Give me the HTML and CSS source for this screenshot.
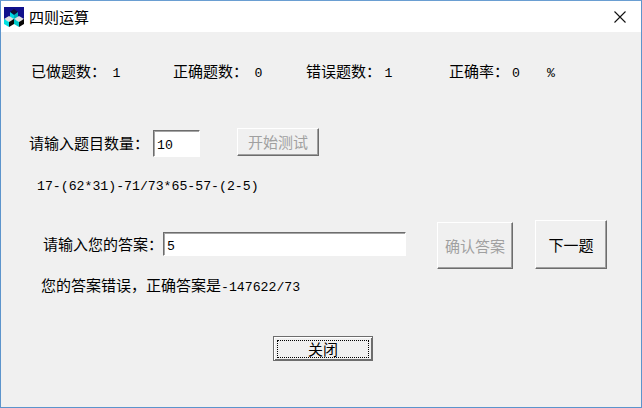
FILE: index.html
```html
<!DOCTYPE html>
<html lang="zh-CN">
<head>
  <title>四则运算</title>
  <link rel="stylesheet" href="styles.css">
</head>
<body>
  <div class="window">
    <div class="titlebar">
      <svg class="app-icon" width="20" height="20" viewBox="0 0 20 20">
        <rect x="0" y="0" width="20" height="13" fill="#10108c"/>
        <path d="M6 5 L10 2 L14 5 L10 8 Z" fill="#101030"/>
        <path d="M6 5 L10 8 V14 L6 11 Z" fill="#00d8e0"/>
        <path d="M14 5 L10 8 V14 L14 11 Z" fill="#00b0b8"/>
        <path d="M0 12 L5 9 L10 12 L5 15 Z" fill="#e0e0e0"/>
        <path d="M0 12 L5 15 V20 L0 17 Z" fill="#00e0e0"/>
        <path d="M10 12 L5 15 V20 L10 17 Z" fill="#080808"/>
        <path d="M10 12 L15 9 L20 12 L15 15 Z" fill="#e0e0e0"/>
        <path d="M10 12 L15 15 V20 L10 17 Z" fill="#00c8c8"/>
        <path d="M20 12 L15 15 V20 L20 17 Z" fill="#080808"/>
      </svg>
      <span class="title">四则运算</span>
      <svg class="close-x" width="12" height="12" viewBox="0 0 12 12">
        <path d="M0.500 0.500 L11.500 11.500 M11.500 0.500 L0.500 11.500" stroke="#111" stroke-width="1.100" fill="none"/>
      </svg>
    </div>

    <div class="client">
      <div class="stats">
        <div class="stat stat-done">已做题数： <span class="mono shift">1</span></div>
        <div class="stat stat-right">正确题数： <span class="mono shift">0</span></div>
        <div class="stat stat-wrong">错误题数： <span class="mono">1</span></div>
        <div class="stat">正确率：<span class="mono shift">0</span><span class="mono percent">%</span></div>
      </div>

      <div class="count-row">
        <label class="count-label">请输入题目数量：</label>
        <div class="field count-field"><span class="mono">10</span></div>
        <button class="btn btn-off start-btn">开始测试</button>
      </div>

      <div class="expr mono">17-(62*31)-71/73*65-57-(2-5)</div>

      <div class="answer-row">
        <label class="answer-label">请输入您的答案：</label>
        <div class="field answer-field"><span class="mono">5</span></div>
        <button class="btn btn-off confirm-btn">确认答案</button>
        <button class="btn next-btn">下一题</button>
      </div>

      <div class="message">您的答案错误，正确答案是<span class="mono">-147622/73</span></div>

      <div class="close-row">
        <button class="btn close-btn"><span class="focus">关闭</span></button>
      </div>
    </div>
  </div>
</body>
</html>
```

FILE: styles.css
```css
html, body {
  margin: 0;
  height: 100%;
  overflow: hidden;
}

body {
  font-family: "Noto Sans CJK SC", sans-serif;
  font-size: 15px;
  color: #000;
}

.window {
  box-sizing: border-box;
  height: 408px;
  display: flex;
  flex-direction: column;
  border: 1px solid #5c94cc;
  border-top-color: #6a9ed2;
  background: #f0f0f0;
}

.titlebar {
  height: 31px;
  flex-shrink: 0;
  display: flex;
  align-items: center;
  padding: 0 15px 0 3px;
  background: #fff;
}

.app-icon {
  margin-right: 5px;
}

.title {
  flex: 1;
  font-size: 15px;
  line-height: 20px;
}

.client {
  flex: 1;
}

.mono {
  font-family: "Liberation Mono", monospace;
  font-size: 13.2px;
}

.shift {
  margin-left: 3px;
}

.stats {
  display: flex;
  padding: 29px 0 0 30px;
  line-height: 20px;
}

.stat {
  white-space: pre;
  width: 142px;
}

.stat-right {
  width: 133px;
}

.stat-wrong {
  width: 143px;
}

.percent {
  margin-left: 27px;
}

.count-row {
  display: flex;
  align-items: center;
  height: 30px;
  margin-top: 43px;
  padding-left: 28px;
}

.count-label {
  width: 124px;
  white-space: nowrap;
}

.field {
  box-sizing: border-box;
  background: #fff;
  border: 1px solid;
  border-color: #6d6d6d #fff #fff #6d6d6d;
  box-shadow: inset 1px 1px 0 #a5a5a5;
  padding-left: 3px;
  line-height: 22px;
}

.count-field {
  width: 47px;
  height: 27px;
  margin-top: 2px;
  line-height: 23px;
}

.btn {
  box-sizing: border-box;
  padding: 0;
  background: #f0f0f0;
  border: 1px solid;
  border-color: #fff #6d6d6d #6d6d6d #fff;
  box-shadow: inset -1px -1px 0 #a0a0a0;
  font-family: inherit;
  font-size: 15px;
  color: #000;
}

.btn-off {
  color: #a0a0a0;
}

.start-btn {
  width: 82px;
  height: 28px;
  margin-left: 37px;
  margin-top: -1px;
}

.expr {
  margin: 20px 0 0 36px;
  line-height: 20px;
}

.answer-row {
  display: flex;
  align-items: flex-end;
  height: 49px;
  margin-top: 23px;
  padding-left: 42px;
}

.answer-label {
  width: 120px;
  white-space: nowrap;
  align-self: center;
  margin-bottom: 2px;
}

.answer-field {
  width: 243px;
  height: 24px;
  margin-bottom: 13px;
}

.confirm-btn {
  width: 76px;
  height: 47px;
  margin-left: 31px;
}

.next-btn {
  width: 72px;
  height: 49px;
  margin-left: 22px;
}

.message {
  margin: 6px 0 0 40px;
  line-height: 20px;
}

.close-row {
  padding-left: 272px;
  margin-top: 38px;
}

.close-btn {
  display: block;
  width: 100px;
  height: 25px;
  border-color: #6d6d6d;
  box-shadow: inset 1px 1px 0 #fff, inset -1px -1px 0 #6d6d6d;
  padding: 3px 3px 2px 3px;
}

.focus {
  display: block;
  height: 100%;
  box-sizing: border-box;
  border: 1px dotted #000;
  line-height: 16px;
}
```
